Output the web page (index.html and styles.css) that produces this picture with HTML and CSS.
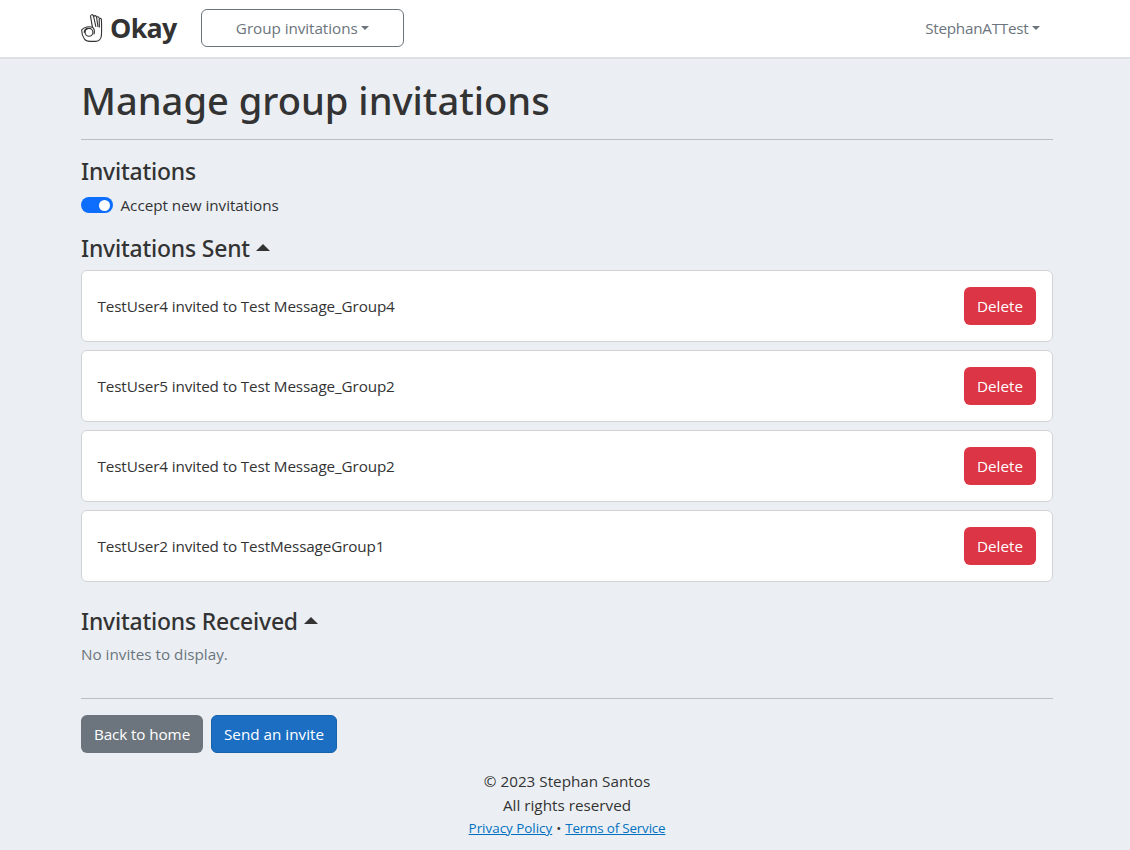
FILE: index.html
```html
<!DOCTYPE html>
<html lang="en">
<head>
<meta charset="utf-8">
<title>Manage group invitations</title>
<link rel="stylesheet" href="styles.css">
</head>
<body>
<header class="navbar">
  <a class="brand">
    <svg class="brand-icon" viewBox="0 0 22 28" fill="none" stroke="#333" stroke-width="1.1" stroke-linecap="round" stroke-linejoin="round">
      <path d="M11.4 13.2C8.4 12 3 13 .7 15.8C.6 19 1.6 22.4 3.4 25C4.6 26.9 6.6 27.4 9 27.4H14.5C17.5 27.4 20.2 25.2 20.4 21.4C20.7 17 20.6 10 20.4 5.6C20.3 4 18.3 4 18.2 5.6L18.4 13"/>
      <path d="M11.4 13.2L9.6 2.6C9.4.2 12 .1 12.5 2L14.8 12.4"/>
      <path d="M12.7 2.8C12.9 1.2 15.1 1.3 15.5 3L17 12.6M15.8 3.4C16.2 2.4 17.8 2.6 18.1 4.2"/>
      <circle cx="8" cy="18.3" r="3.9"/>
      <path d="M3.2 18.4C3.4 15.8 4.6 14.8 6.6 14.4M11.4 13.2C13.2 14.4 13.8 17 13 20"/>
    </svg>
    <span class="brand-name">Okay</span>
  </a>
  <button class="group-select"><span>Group invitations</span><i class="caret"></i></button>
  <a class="user-menu"><span class="user-name">StephanATTest</span><i class="caret"></i></a>
</header>
<main class="page">
  <h1>Manage group invitations</h1>
  <hr>
  <h2>Invitations</h2>
  <label class="switch-row"><span class="switch"><span class="knob"></span></span><span>Accept new invitations</span></label>
  <h2 class="sent">Invitations Sent<i class="caret up"></i></h2>
  <ul class="cards">
    <li class="card"><span>TestUser4 invited to Test Message_Group4</span><button class="btn danger">Delete</button></li>
    <li class="card"><span>TestUser5 invited to Test Message_Group2</span><button class="btn danger">Delete</button></li>
    <li class="card"><span>TestUser4 invited to Test Message_Group2</span><button class="btn danger">Delete</button></li>
    <li class="card"><span>TestUser2 invited to TestMessageGroup1</span><button class="btn danger">Delete</button></li>
  </ul>
  <h2 class="received">Invitations Received<i class="caret up"></i></h2>
  <p class="empty">No invites to display.</p>
  <hr class="bottom-rule">
  <div class="actions">
    <a class="btn secondary">Back to home</a>
    <a class="btn primary">Send an invite</a>
  </div>
  <footer class="footer">
    <div>© 2023 Stephan Santos</div>
    <div>All rights reserved</div>
    <div class="legal"><a class="link">Privacy Policy</a><span class="dot">•</span><a class="link terms">Terms of Service</a></div>
  </footer>
</main>
</body>
</html>
```
FILE: styles.css
```css
* { box-sizing: border-box; }
body { margin: 0; background: #ebeff4; color: #333; font: 15.25px/24px "Open Sans", "Noto Sans", sans-serif; white-space: nowrap; }
.navbar { display: flex; align-items: center; height: 59px; padding: 0 90px 2px 81px; background: #fff; border-bottom: 2px solid #dce0e5; }
.brand { display: flex; align-items: center; width: 120px; gap: 7px; }
.brand-icon { width: 22px; height: 28px; }
.brand-name { font-size: 26.8px; font-weight: 700; letter-spacing: -0.7px; }
.group-select { width: 203px; height: 38px; display: flex; align-items: center; justify-content: center; border: 1px solid #6c757d; border-radius: 6px; background: #fff; color: #6c757d; font: inherit; letter-spacing: -0.06px; }
.user-menu { margin-left: auto; display: flex; align-items: center; color: #6c757d; }
.user-name { letter-spacing: -0.25px; }
.caret { border: 4.8px solid transparent; border-top-color: currentColor; border-bottom: 0; margin-left: 3.5px; }
.page { padding: 17px 77px 0 81px; }
h1, h2, p, ul { margin: 0; padding: 0; }
h1, h2 { font-family: "Noto Sans", "Open Sans", sans-serif; font-weight: 500; }
h1 { font-size: 38.1px; line-height: 48px; }
hr { height: 1px; border: 0; margin: 15px 0 17px; background: #bbbfc4; }
h2 { display: flex; align-items: center; font-size: 22.9px; line-height: 29px; letter-spacing: -0.18px; }
.caret.up { border: 7.2px solid transparent; border-bottom-color: currentColor; border-top: 0; margin: 0 0 2px 6px; }
.switch-row { display: flex; align-items: center; gap: 7.5px; margin-top: 7px; letter-spacing: -0.03px; }
.switch { display: flex; align-items: center; justify-content: flex-end; width: 32px; height: 16px; padding-right: 3px; border-radius: 8px; background: #0d6efd; }
.knob { width: 11px; height: 11px; border-radius: 50%; background: #fff; }
.cards { list-style: none; display: grid; gap: 8px; margin-top: 7px; }
.sent { margin-top: 17px; }
.card { display: flex; align-items: center; justify-content: space-between; height: 72px; padding: 0 16px 0 15.5px; background: #fff; border: 1px solid #d0d2d4; border-radius: 6px; letter-spacing: -0.13px; }
.btn { display: inline-flex; align-items: center; justify-content: center; height: 38px; border: 0; border-radius: 6px; color: #fff; font: inherit; }
.danger { width: 72px; background: #dc3545; }
.received { margin-top: 25px; }
.empty { margin-top: 6px; color: #6c757d; }
.bottom-rule { margin: 32px 0 16px; }
.actions { display: flex; gap: 8px; }
.secondary { width: 122px; background: #6c757d; letter-spacing: -0.1px; }
.primary { width: 126px; background: #1b6ec2; border: 1px solid #1861ac; }
.footer { text-align: center; margin-top: 16px; }
.legal { font-size: 13.4px; line-height: 22px; }
.link { color: #0071c1; text-decoration: underline; }
.terms { letter-spacing: -0.18px; }
.dot { margin: 0 4px; }
```
